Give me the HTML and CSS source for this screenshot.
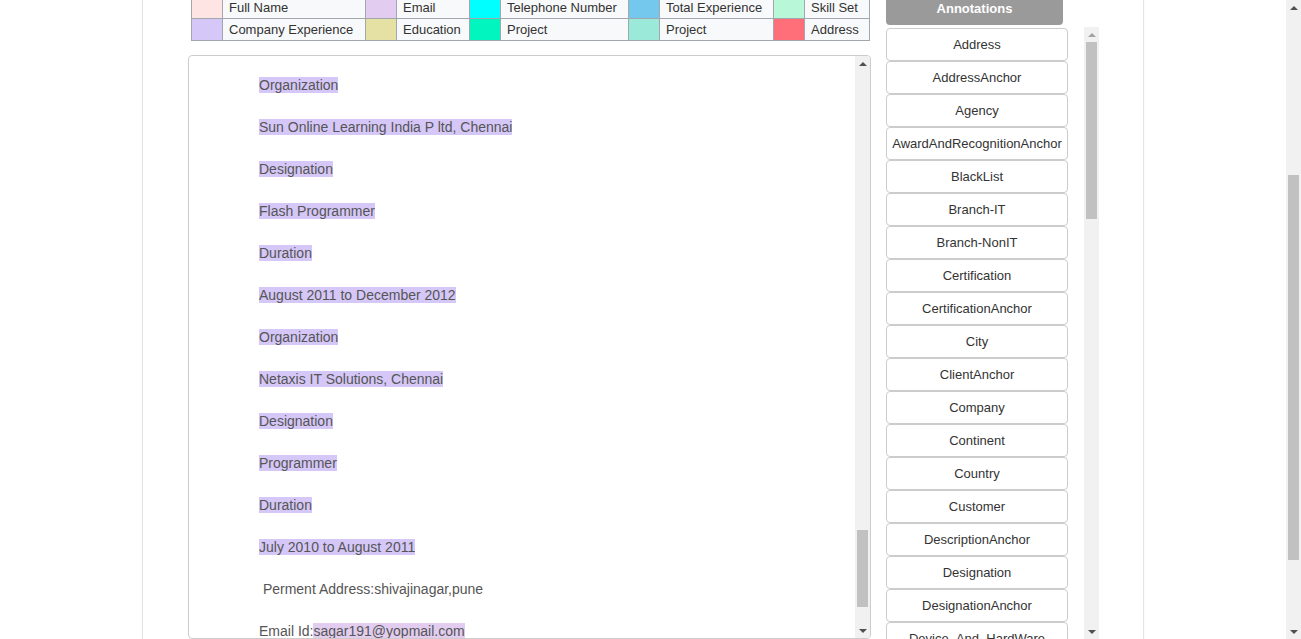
FILE: index.html
```html
<!DOCTYPE html>
<html lang="en">
<head>
<meta charset="utf-8">
<title>Resume Annotation</title>
<link rel="stylesheet" href="styles.css">
</head>
<body>
<div class="viewport">
  <div class="container">
    <div class="left-col">
      <table class="legend">
        <colgroup>
          <col class="c-sw"><col class="c-1"><col class="c-sw"><col class="c-2"><col class="c-sw"><col class="c-3"><col class="c-sw"><col class="c-4"><col class="c-sw"><col class="c-5">
        </colgroup>
        <tr>
          <td class="sw sw-fullname"></td><td class="lbl">Full Name</td>
          <td class="sw sw-email"></td><td class="lbl">Email</td>
          <td class="sw sw-phone"></td><td class="lbl">Telephone Number</td>
          <td class="sw sw-totexp"></td><td class="lbl">Total Experience</td>
          <td class="sw sw-skill"></td><td class="lbl">Skill Set</td>
        </tr>
        <tr>
          <td class="sw sw-compexp"></td><td class="lbl">Company Experience</td>
          <td class="sw sw-edu"></td><td class="lbl">Education</td>
          <td class="sw sw-project1"></td><td class="lbl">Project</td>
          <td class="sw sw-project2"></td><td class="lbl">Project</td>
          <td class="sw sw-address"></td><td class="lbl">Address</td>
        </tr>
      </table>

      <div class="doc-box">
        <div class="doc-content">
          <p><span class="hl-comp">Organization</span></p>
          <p><span class="hl-comp">Sun Online Learning India P ltd, Chennai</span></p>
          <p><span class="hl-comp">Designation</span></p>
          <p><span class="hl-comp">Flash Programmer</span></p>
          <p><span class="hl-comp">Duration</span></p>
          <p><span class="hl-comp">August 2011 to December 2012</span></p>
          <p><span class="hl-comp">Organization</span></p>
          <p><span class="hl-comp">Netaxis IT Solutions, Chennai</span></p>
          <p><span class="hl-comp">Designation</span></p>
          <p><span class="hl-comp">Programmer</span></p>
          <p><span class="hl-comp">Duration</span></p>
          <p><span class="hl-comp">July 2010 to August 2011</span></p>
          <p>&nbsp;Perment Address:shivajinagar,pune</p>
          <p>Email Id:<span class="hl-email">sagar191@yopmail.com</span></p>
        </div>
        <div class="sb sb-doc">
          <div class="sb-btn"><span class="arrow-up"></span></div>
          <div class="sb-track"><div class="sb-thumb thumb-doc"></div></div>
          <div class="sb-btn"><span class="arrow-down"></span></div>
        </div>
      </div>
    </div>

    <div class="right-col">
      <div class="ann-header">Annotations</div>
      <div class="ann-list">
        <div class="ann-buttons">
          <button class="ann-btn">Address</button>
          <button class="ann-btn">AddressAnchor</button>
          <button class="ann-btn">Agency</button>
          <button class="ann-btn">AwardAndRecognitionAnchor</button>
          <button class="ann-btn">BlackList</button>
          <button class="ann-btn">Branch-IT</button>
          <button class="ann-btn">Branch-NonIT</button>
          <button class="ann-btn">Certification</button>
          <button class="ann-btn">CertificationAnchor</button>
          <button class="ann-btn">City</button>
          <button class="ann-btn">ClientAnchor</button>
          <button class="ann-btn">Company</button>
          <button class="ann-btn">Continent</button>
          <button class="ann-btn">Country</button>
          <button class="ann-btn">Customer</button>
          <button class="ann-btn">DescriptionAnchor</button>
          <button class="ann-btn">Designation</button>
          <button class="ann-btn">DesignationAnchor</button>
          <button class="ann-btn">Device_And_HardWare</button>
        </div>
        <div class="sb sb-ann">
          <div class="sb-btn"><span class="arrow-up arrow-disabled"></span></div>
          <div class="sb-track"><div class="sb-thumb thumb-ann"></div></div>
          <div class="sb-btn"><span class="arrow-down"></span></div>
        </div>
      </div>
    </div>
  </div>
</div>
<div class="sb sb-page">
  <div class="sb-btn"><span class="arrow-up"></span></div>
  <div class="sb-track"><div class="sb-thumb thumb-page"></div></div>
  <div class="sb-btn"><span class="arrow-down"></span></div>
</div>
</body>
</html>
```

FILE: styles.css
```css
html, body {
  margin: 0;
  padding: 0;
  height: 100%;
  overflow: hidden;
  background: #ffffff;
}

body {
  display: flex;
  font-family: "Liberation Sans", Arial, sans-serif;
  color: #333;
}

.viewport {
  flex: 1;
  height: 100%;
  overflow: hidden;
}

.container {
  box-sizing: border-box;
  width: 1002px;
  height: 100%;
  margin: 0 auto;
  border-left: 1px solid #e4e4e4;
  border-right: 1px solid #e4e4e4;
  box-shadow: 0 0 2px rgba(0, 0, 0, 0.06);
  padding-left: 45px;
  display: flex;
  gap: 15px;
}

/* ---------- left column ---------- */
.left-col {
  width: 683px;
  display: flex;
  flex-direction: column;
}

.legend {
  margin: -4px 0 0 3px;
  border-collapse: collapse;
  table-layout: fixed;
  width: 678px;
  font-size: 13px;
  color: #333;
}

.legend td {
  border: 1px solid #a2a6ad;
  height: 21px;
  padding: 0 6px;
  line-height: 20px;
  white-space: nowrap;
}

.legend .lbl { background: #f8f9fa; }

.c-sw { width: 31px; }
.c-1 { width: 143px; }
.c-2 { width: 73px; }
.c-3 { width: 128px; }
.c-4 { width: 114px; }
.c-5 { width: 65px; }

.sw-fullname { background: #ffe4e4; }
.sw-email { background: #e2cdf0; }
.sw-phone { background: #00ffff; }
.sw-totexp { background: #74c8ee; }
.sw-skill { background: #b9f7d9; }
.sw-compexp { background: #d5c8f8; }
.sw-edu { background: #e5e1a5; }
.sw-project1 { background: #00f5bf; }
.sw-project2 { background: #9be9d8; }
.sw-address { background: #ff6f79; }

.doc-box {
  box-sizing: border-box;
  margin-top: 14px;
  height: 584px;
  border: 1px solid #cccccc;
  border-radius: 4px;
  display: flex;
  overflow: hidden;
}

.doc-content {
  flex: 1;
  overflow: hidden;
  padding: 19px 0 0 70px;
  font-size: 14px;
  color: #555;
}

.doc-content p {
  margin: 0 0 22px;
  line-height: 20px;
  white-space: nowrap;
}

.hl-comp { background: #d5c8f8; }
.hl-email { background: #e2cdf0; }

/* ---------- right column ---------- */
.right-col {
  width: 213px;
  display: flex;
  flex-direction: column;
}

.ann-header {
  width: 177px;
  height: 32px;
  margin-top: -7px;
  line-height: 32px;
  background: #9a9a9a;
  color: #ffffff;
  font-weight: bold;
  font-size: 13px;
  text-align: center;
  border-radius: 0 0 4px 4px;
}

.ann-list {
  margin-top: 2px;
  flex: 1;
  display: flex;
  overflow: hidden;
}

.ann-buttons {
  width: 182px;
  padding-top: 1px;
  display: flex;
  flex-direction: column;
}

.ann-btn {
  box-sizing: border-box;
  flex: none;
  height: 33px;
  width: 182px;
  margin: 0;
  padding: 0;
  background: #ffffff;
  border: 1px solid #cccccc;
  border-radius: 4px;
  font-family: "Liberation Sans", Arial, sans-serif;
  font-size: 13px;
  color: #333;
  text-align: center;
  white-space: nowrap;
}

/* ---------- fake scrollbars ---------- */
.sb {
  width: 15px;
  flex: none;
  background: #f1f1f1;
  display: flex;
  flex-direction: column;
}

.sb-ann { margin-left: auto; }

.sb-page { height: 100%; }

.sb-btn {
  height: 15px;
  flex: none;
  display: flex;
  align-items: center;
  justify-content: center;
}

.sb-track {
  flex: 1;
}

.sb-thumb {
  margin: 0 2px;
  background: #c1c1c1;
}

.thumb-page { margin-top: 160px; height: 385px; }
.thumb-doc { margin-top: 459px; height: 77px; }
.thumb-ann { margin-top: 0; height: 177px; }

.arrow-up,
.arrow-down {
  width: 0;
  height: 0;
  border-left: 4px solid transparent;
  border-right: 4px solid transparent;
}

.arrow-up { border-bottom: 4px solid #505050; }
.arrow-down { border-top: 4px solid #505050; }
.arrow-up.arrow-disabled { border-bottom-color: #a3a3a3; }
```
